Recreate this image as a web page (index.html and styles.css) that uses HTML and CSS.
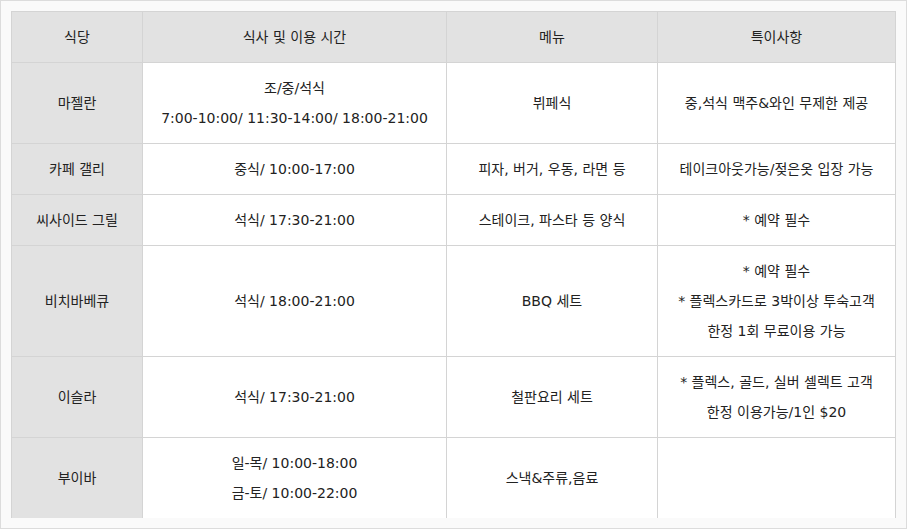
FILE: index.html
```html
<!DOCTYPE html>
<html lang="ko">
<head>
<meta charset="utf-8">
<link rel="stylesheet" href="styles.css">
</head>
<body>
<div class="frame">
  <div class="viewport">
    <table class="dining">
      <colgroup>
        <col class="c1"><col class="c2"><col class="c3"><col class="c4">
      </colgroup>
      <thead>
        <tr><th>식당</th><th>식사 및 이용 시간</th><th>메뉴</th><th>특이사항</th></tr>
      </thead>
      <tbody>
        <tr>
          <th>마젤란</th>
          <td>조/중/석식<br>7:00-10:00/ 11:30-14:00/ 18:00-21:00</td>
          <td>뷔페식</td>
          <td>중,석식 맥주&amp;와인 무제한 제공</td>
        </tr>
        <tr>
          <th>카페 갤리</th>
          <td>중식/ 10:00-17:00</td>
          <td>피자, 버거, 우동, 라면 등</td>
          <td>테이크아웃가능/젖은옷 입장 가능</td>
        </tr>
        <tr>
          <th>씨사이드 그릴</th>
          <td>석식/ 17:30-21:00</td>
          <td>스테이크, 파스타 등 양식</td>
          <td>* 예약 필수</td>
        </tr>
        <tr>
          <th>비치바베큐</th>
          <td>석식/ 18:00-21:00</td>
          <td>BBQ 세트</td>
          <td>* 예약 필수<br>* 플렉스카드로 3박이상 투숙고객<br>한정 1회 무료이용 가능</td>
        </tr>
        <tr>
          <th>이슬라</th>
          <td>석식/ 17:30-21:00</td>
          <td>철판요리 세트</td>
          <td>* 플렉스, 골드, 실버 셀렉트 고객<br>한정 이용가능/1인 $20</td>
        </tr>
        <tr>
          <th>부이바</th>
          <td>일-목/ 10:00-18:00<br>금-토/ 10:00-22:00</td>
          <td>스낵&amp;주류,음료</td>
          <td></td>
        </tr>
      </tbody>
    </table>
  </div>
</div>
</body>
</html>
```
FILE: styles.css
```css
html, body {
  margin: 0;
  padding: 0;
  background: #fff;
}
.frame {
  width: 907px;
  height: 529px;
  box-sizing: border-box;
  border: 1px solid #dcdcdc;
  padding: 10px;
  background: #fafafa;
}
.viewport {
  height: 507px;
  overflow: hidden;
  background: #fff;
}
.dining {
  width: 885px;
  border-collapse: collapse;
  table-layout: fixed;
  font-family: "DejaVu Sans", "Noto Sans CJK KR", sans-serif;
  font-size: 14px;
  color: #222;
}
.c1 { width: 131px; }
.c2 { width: 304px; }
.c3 { width: 211px; }
.c4 { width: 238px; }
.dining th,
.dining td {
  border: 1px solid #d4d4d4;
  padding: 10px 0;
  line-height: 30px;
  text-align: center;
  vertical-align: middle;
  font-weight: normal;
}
.dining thead th,
.dining tbody th {
  background: #e2e2e2;
}
.dining td {
  background: #fff;
}
```
